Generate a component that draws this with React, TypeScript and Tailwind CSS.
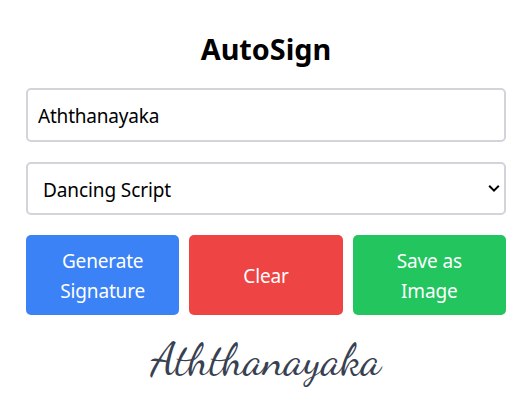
import { useState } from "react";

const fonts = ["Dancing Script", "Great Vibes", "Pacifico"];

export default function App() {
  const [name, setName] = useState("Aththanayaka");
  const [signature, setSignature] = useState("Aththanayaka");
  const [font, setFont] = useState(fonts[0]);

  const button =
    "flex-1 basis-0 rounded-[5px] px-5 pb-[9px] pt-[11px] text-[19px] leading-[30px] tracking-[-0.15px] text-white";

  return (
    <main className="flex h-[412px] flex-col overflow-hidden bg-white pl-[26px] pr-[25px] pt-[29px] font-['Segoe_UI','Noto_Sans',sans-serif] text-black">
      <h1 className="text-center text-[28.8px] font-bold leading-[40px]">AutoSign</h1>
      <input
        type="text"
        value={name}
        onChange={(e) => setName(e.target.value)}
        className="mt-[19px] h-[54px] w-full rounded-[5px] border-2 border-[#d1d5db] px-[10px] pt-[2px] text-[19px] tracking-[-0.2px] outline-none"
      />
      <div className="relative mt-5 h-[53px]">
        <select
          value={font}
          onChange={(e) => setFont(e.target.value)}
          className="h-full w-full appearance-none rounded-[5px] border-2 border-[#d1d5db] bg-white pl-[15px] pt-[4px] text-[19px] tracking-[-0.1px] outline-none"
        >
          {fonts.map((f) => (
            <option key={f}>{f}</option>
          ))}
        </select>
        <svg
          className="pointer-events-none absolute right-[6px] top-[22px] h-[9px] w-[12px]"
          viewBox="0 0 12 9"
          fill="none"
          stroke="black"
          strokeWidth="2"
        >
          <path d="M1.2 1.8 6 6.6l4.8-4.8" />
        </svg>
      </div>
      <div className="mt-5 flex h-20 gap-[10px]">
        <button className={`${button} bg-[#3b82f6]`} onClick={() => setSignature(name)}>
          Generate Signature
        </button>
        <button className={`${button} bg-[#ef4444]`} onClick={() => setSignature("")}>
          Clear
        </button>
        <button className={`${button} bg-[#22c55e]`}>Save as Image</button>
      </div>
      <div className="mt-[18px] text-center font-['Dancing_Script',cursive] text-[45px] leading-[54px] text-[#374151]">
        {signature}
      </div>
    </main>
  );
}
